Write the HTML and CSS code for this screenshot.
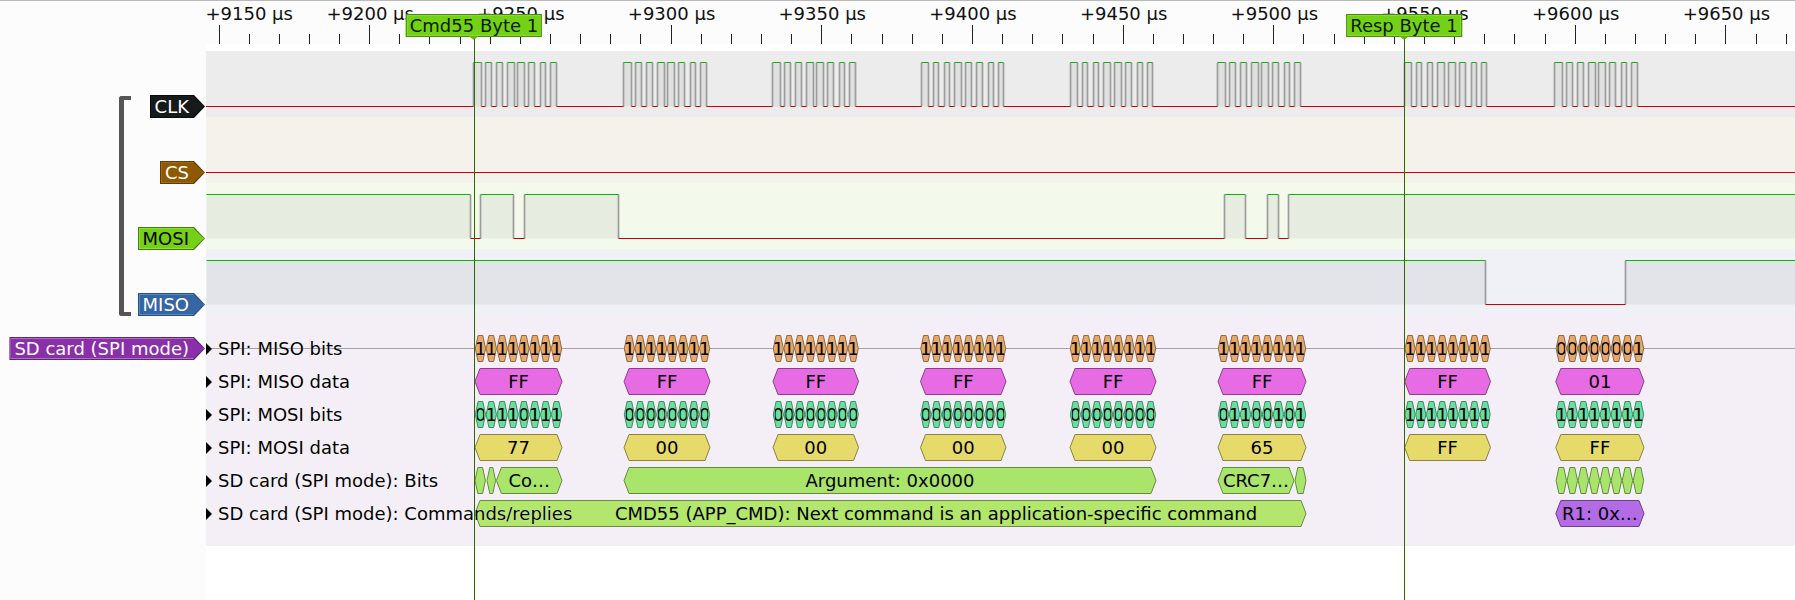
FILE: index.html
```html
<!DOCTYPE html>
<html lang="en">
<head>
    <meta charset="UTF-8">
    <title>PulseView</title>
    <link rel="stylesheet" href="styles.css">
    <script src="script.js"></script>
</head>
<body>
    <div class="page">
        <svg id="ruler" class="ruler" width="1795" height="43"></svg>
        <div class="view">
            <div class="headers">
                <div class="logic-group">
                    <div class="head-row"><div class="tag tag-clk"><span>CLK</span></div></div>
                    <div class="head-row"><div class="tag tag-cs"><span>CS</span></div></div>
                    <div class="head-row"><div class="tag tag-mosi"><span>MOSI</span></div></div>
                    <div class="head-row"><div class="tag tag-miso"><span>MISO</span></div></div>
                </div>
                <div class="head-decoder"><div class="tag tag-sd"><span>SD card (SPI mode)</span></div></div>
            </div>
            <div class="traces">
                <div class="logic-row row-clk"><svg id="clk" viewBox="206 0 1589 66"></svg></div>
                <div class="logic-row row-cs"><svg id="cs" viewBox="206 0 1589 66"></svg></div>
                <div class="logic-row row-mosi"><svg id="mosi" viewBox="206 0 1589 66"></svg></div>
                <div class="logic-row row-miso"><svg id="miso" viewBox="206 0 1589 66"></svg></div>
                <div class="decoder">
                    <div class="dec-row"><svg id="misoBits" viewBox="206 0 1589 33"></svg><span class="dec-label">SPI: MISO bits</span></div>
                    <div class="dec-row"><svg id="misoData" viewBox="206 0 1589 33"></svg><span class="dec-label">SPI: MISO data</span></div>
                    <div class="dec-row"><svg id="mosiBits" viewBox="206 0 1589 33"></svg><span class="dec-label">SPI: MOSI bits</span></div>
                    <div class="dec-row"><svg id="mosiData" viewBox="206 0 1589 33"></svg><span class="dec-label">SPI: MOSI data</span></div>
                    <div class="dec-row"><svg id="sdBits" viewBox="206 0 1589 33"></svg><span class="dec-label">SD card (SPI mode): Bits</span></div>
                    <div class="dec-row"><svg id="sdCmds" viewBox="206 0 1589 33"></svg><span class="dec-label">SD card (SPI mode): Commands/replies</span></div>
                </div>
            </div>
        </div>
        <div class="cursor cursor-cmd"><div class="flag">Cmd55 Byte 1</div></div>
        <div class="cursor cursor-resp"><div class="flag">Resp Byte 1</div></div>
    </div>
</body>
</html>
```
FILE: styles.css
```css
*{
    margin: 0;
    padding: 0;
    box-sizing: border-box;
}
body{
    background-color: #ffffff;
    font-family: "DejaVu Sans", sans-serif;
    font-size: 18px;
    color: #000000;
    overflow: hidden;
}
.page{
    position: relative;
    width: 1795px;
    height: 600px;
    overflow: hidden;
    background-color: #ffffff;
}
.ruler{
    display: block;
    height: 44px;
    border-top: 1px solid #b9b9b9;
    background-color: #fcfcfc;
}
.ruler text{
    font-family: "DejaVu Sans", sans-serif;
    font-size: 18px;
    fill: #111111;
}
.tick{
    stroke: #222222;
    stroke-width: 1;
}
.view{
    display: flex;
    height: 556px;
}

/* left column */
.headers{
    width: 206px;
    flex: none;
    padding-top: 7px;
    background-color: #fcfcfc;
}
.logic-group{
    position: relative;
}
/* the bracket round the four logic channels */
.logic-group::before{
    content: "";
    box-sizing: border-box;
    position: absolute;
    left: 119px;
    top: 45px;
    width: 12px;
    height: 220px;
    border: 4px solid #555555;
    border-left-width: 5px;
    border-right: 0;
    border-radius: 3px 0 0 3px;
}
.head-row{
    height: 66px;
    display: flex;
    justify-content: flex-end;
    align-items: flex-end;
    padding-right: 1px;
}
.head-decoder{
    display: flex;
    justify-content: flex-end;
    padding: 22px 1px 0 0;
}
.tag{
    height: 23px;
    padding: 1px;
    margin-bottom: -1px;
    clip-path: polygon(0 0, calc(100% - 11px) 0, 100% 50%, calc(100% - 11px) 100%, 0 100%);
}
.tag span{
    display: block;
    height: 21px;
    line-height: 21px;
    padding: 0 15px 0 4px;
    white-space: nowrap;
    color: #ffffff;
    clip-path: polygon(0 0, calc(100% - 11px) 0, 100% 50%, calc(100% - 11px) 100%, 0 100%);
}
.tag-clk{ background-color: #0a0c0c; }
.tag-clk span{ background-color: #171a1b; }
.tag-cs{ background-color: #5f3c03; }
.tag-cs span{ background-color: #8f5902; box-shadow: inset 0 0 0 1px #a06a14; }
.tag-mosi{ background-color: #4b7a12; }
.tag-mosi span{ background-color: #73d216; color: #000000; box-shadow: inset 0 0 0 1px #8ae234; }
.tag-miso{ background-color: #28507f; }
.tag-miso span{ background-color: #3465a4; box-shadow: inset 0 0 0 1px #5a88c2; }
.tag-sd{ background-color: #5c2a70; }
.tag-sd span{ background-color: #8a2eaa; box-shadow: inset 0 0 0 1px #ad6fc2; }

/* traces */
.traces{
    flex: 1;
    padding-top: 7px;
    background-color: #ffffff;
}
.logic-row{
    height: 66px;
}
.logic-row svg{
    display: block;
    width: 1589px;
    height: 66px;
}
.row-clk{ background-color: #ececec; }
.row-cs{ background-color: #f5f1eb; }
.row-mosi{ background-color: #f3f9eb; }
.row-miso{ background-color: #eff1f7; }
.high-fill{ fill: rgba(0, 0, 0, 0.05); }
.sig-high{ stroke: #00bd00; stroke-width: 1; fill: none; }
.sig-low{ stroke: #cc0000; stroke-width: 1; fill: none; }
.sig-edge{ stroke: #9c9c9c; stroke-width: 1.7; fill: none; }

.decoder{
    padding: 17px 0 16px;
    background-color: #f4eff7;
}
.dec-row{
    position: relative;
    height: 33px;
    display: flex;
    align-items: center;
}
.dec-row > svg{
    position: absolute;
    left: 0;
    top: 0;
    width: 1589px;
    height: 33px;
}
.dec-label{
    position: relative;
    display: flex;
    align-items: center;
    gap: 6px;
    white-space: nowrap;
    text-shadow: 0 0 1px #ffffff;
}
.dec-label::before{
    content: "";
    border-left: 6px solid #000000;
    border-top: 6px solid transparent;
    border-bottom: 6px solid transparent;
}
.rail{ stroke: #a5a3a7; stroke-width: 1; }
.ann-text{
    font-family: "DejaVu Sans", sans-serif;
    font-size: 18px;
    text-anchor: middle;
    fill: #000000;
}
.hex{ stroke-width: 1; }
.miso-bit{ fill: #e8a868; stroke: #8c6a48; }
.miso-data{ fill: #e76be3; stroke: #8c4089; }
.mosi-bit{ fill: #68de9f; stroke: #438a66; }
.mosi-data{ fill: #e6da6b; stroke: #8a8344; }
.sd-bit{ fill: #a9e46b; stroke: #668a42; }
.sd-cmd{ fill: #b2e66d; stroke: #6b8a44; }
.sd-reply{ fill: #b46be6; stroke: #6c418a; }

/* cursors with their flags */
.cursor{
    position: absolute;
    top: 14px;
    bottom: 0;
    width: 1px;
}
.cursor::before{
    content: "";
    position: absolute;
    left: 0;
    top: 25px;
    bottom: 0;
    width: 1px;
    background-color: #2f6800;
}
.cursor-cmd{ left: 474px; }
.cursor-resp{ left: 1404px; }
.flag{
    position: absolute;
    left: 0;
    top: 0;
    height: 23px;
    line-height: 21px;
    padding: 0 3px;
    transform: translateX(-50%);
    white-space: nowrap;
    color: #0c1a00;
    background-color: #73d216;
    border: 1px solid #4e8a0c;
    box-shadow: inset 0 0 0 1px #86dc34;
}
.flag::after{
    content: "";
    position: absolute;
    left: 50%;
    top: 21px;
    margin-left: -5px;
    border-top: 4px solid #64b313;
    border-left: 5px solid transparent;
    border-right: 5px solid transparent;
}
```
FILE: script.js
```js
window.onload = function(){
    // page x of a given time, the ruler is 3.0138px per us
    let left = 206, right = 1795;
    let tick0 = 219.5, step = 30.138;

    // ruler
    let ruler = '';
    for (let i = 0; tick0 + i * step < right; i++) {
        let x = Math.round(tick0 + i * step) - 0.5;
        if (i % 5 == 0) {
            ruler += '<line class="tick" x1="' + x + '" x2="' + x + '" y1="24" y2="43"/>';
            let t = tick0 + i * step;
            let label = '+' + (9150 + i * 10) + ' \u00b5s';
            if (i == 0) {
                ruler += '<text x="' + (left - 0.5) + '" y="19">' + label + '</text>';
            } else {
                ruler += '<text x="' + t + '" y="19" text-anchor="middle">' + label + '</text>';
            }
        } else {
            ruler += '<line class="tick" x1="' + x + '" x2="' + x + '" y1="33" y2="43"/>';
        }
    }
    document.getElementById('ruler').innerHTML = ruler;

    // logic traces, highs is a list of [from, to]
    function trace(id, highs){
        let hi = 11.5, lo = 55.5;
        let s = '', low = '', high = '', edges = '';
        let last = left;
        for (let i = 0; i < highs.length; i++) {
            let a = Math.round(highs[i][0]) + 0.5;
            let b = Math.round(highs[i][1]) + 0.5;
            s += '<rect class="high-fill" x="' + a + '" y="' + hi + '" width="' + (b - a) + '" height="' + (lo - hi) + '"/>';
            high += 'M' + a + ' ' + hi + 'H' + b;
            if (a > left + 1) {
                low += 'M' + last + ' ' + lo + 'H' + a;
                edges += 'M' + a + ' ' + hi + 'V' + lo;
            }
            if (b < right) {
                edges += 'M' + b + ' ' + hi + 'V' + lo;
            }
            last = b;
        }
        if (last < right) {
            low += 'M' + last + ' ' + lo + 'H' + right;
        }
        s += '<path class="sig-edge" d="' + edges + '"/>';
        s += '<path class="sig-low" d="' + low + '"/>';
        s += '<path class="sig-high" d="' + high + '"/>';
        document.getElementById(id).innerHTML = s;
    }

    let clkStarts = [473.3, 623.2, 772.3, 920.6, 1070, 1217.3, 1403.8, 1554.2];
    let pulse = [[0, 7.4], [12, 17.4], [23, 28.4], [33.4, 40.4], [44, 50.7], [55, 61], [67, 72], [77, 82.4]];
    let clkHighs = [];
    for (let i = 0; i < clkStarts.length; i++) {
        for (let j = 0; j < pulse.length; j++) {
            clkHighs.push([clkStarts[i] + pulse[j][0], clkStarts[i] + pulse[j][1]]);
        }
    }
    trace('clk', clkHighs);
    trace('cs', []);
    trace('mosi', [[206, 469.6], [480, 513], [523.7, 618.2], [1223.5, 1244.6], [1267, 1277.6], [1288.2, 1795]]);
    trace('miso', [[206, 1485], [1625, 1795]]);

    // annotations
    function hex(cls, a, b, text, clip, textX){
        let top = 3.5, bot = 29.5, mid = 16.5;
        let tip = (b - a) < 16 ? 2.8 : 5;
        let pts = a + ',' + mid + ' ' + (a + tip) + ',' + top + ' ' + (b - tip) + ',' + top + ' ' +
            b + ',' + mid + ' ' + (b - tip) + ',' + bot + ' ' + (a + tip) + ',' + bot;
        let s = '<polygon class="hex ' + cls + '" points="' + pts + '"/>';
        if (text !== undefined) {
            let tx = textX || (a + b) / 2;
            let t = '<text class="ann-text" x="' + tx + '" y="23">' + text + '</text>';
            if (clip) {
                // narrow bit cells cut their digit off
                t = '<svg x="' + (a + 1.5) + '" y="0" width="' + (b - a - 3) + '" height="33" viewBox="' + (a + 1.5) + ' 0 ' + (b - a - 3) + ' 33">' + t + '</svg>';
            }
            s += t;
        }
        return s;
    }

    let starts = [475, 624, 773, 920.5, 1070, 1218, 1404.7, 1555.8];
    let ends = [562, 710, 858.6, 1006, 1156, 1306, 1490.5, 1644];
    let misoVals = ['FF', 'FF', 'FF', 'FF', 'FF', 'FF', 'FF', '01'];
    let mosiVals = ['77', '00', '00', '00', '00', '65', 'FF', 'FF'];

    function bits(cls, vals){
        let s = '';
        for (let i = 0; i < starts.length; i++) {
            let w = (ends[i] - starts[i]) / 8;
            let b = parseInt(vals[i], 16).toString(2).padStart(8, '0');
            for (let j = 0; j < 8; j++) {
                s += hex(cls, starts[i] + j * w + 0.3, starts[i] + (j + 1) * w - 0.3, b[j], true);
            }
        }
        return s;
    }
    function bytes(cls, vals){
        let s = '';
        for (let i = 0; i < starts.length; i++) {
            s += hex(cls, starts[i], ends[i], vals[i]);
        }
        return s;
    }

    document.getElementById('misoBits').innerHTML =
        '<line class="rail" x1="' + left + '" x2="' + right + '" y1="16.5" y2="16.5"/>' + bits('miso-bit', misoVals);
    document.getElementById('misoData').innerHTML = bytes('miso-data', misoVals);
    document.getElementById('mosiBits').innerHTML = bits('mosi-bit', mosiVals);
    document.getElementById('mosiData').innerHTML = bytes('mosi-data', mosiVals);

    let sd = hex('sd-bit', 475, 485.4) + hex('sd-bit', 487, 495.6) + hex('sd-bit', 496.4, 562, 'Co\u2026');
    sd += hex('sd-bit', 624, 1156, 'Argument: 0x0000');
    sd += hex('sd-bit', 1218, 1294, 'CRC7\u2026') + hex('sd-bit', 1295, 1306);
    let w8 = (ends[7] - starts[7]) / 8;
    for (let j = 0; j < 8; j++) {
        sd += hex('sd-bit', starts[7] + j * w8 + 0.3, starts[7] + (j + 1) * w8 - 0.3);
    }
    document.getElementById('sdBits').innerHTML = sd;

    document.getElementById('sdCmds').innerHTML =
        hex('sd-cmd', 475, 1306, 'CMD55 (APP_CMD): Next command is an application-specific command', false, 936) +
        hex('sd-reply', 1555.8, 1644, 'R1: 0x\u2026');
};
```
